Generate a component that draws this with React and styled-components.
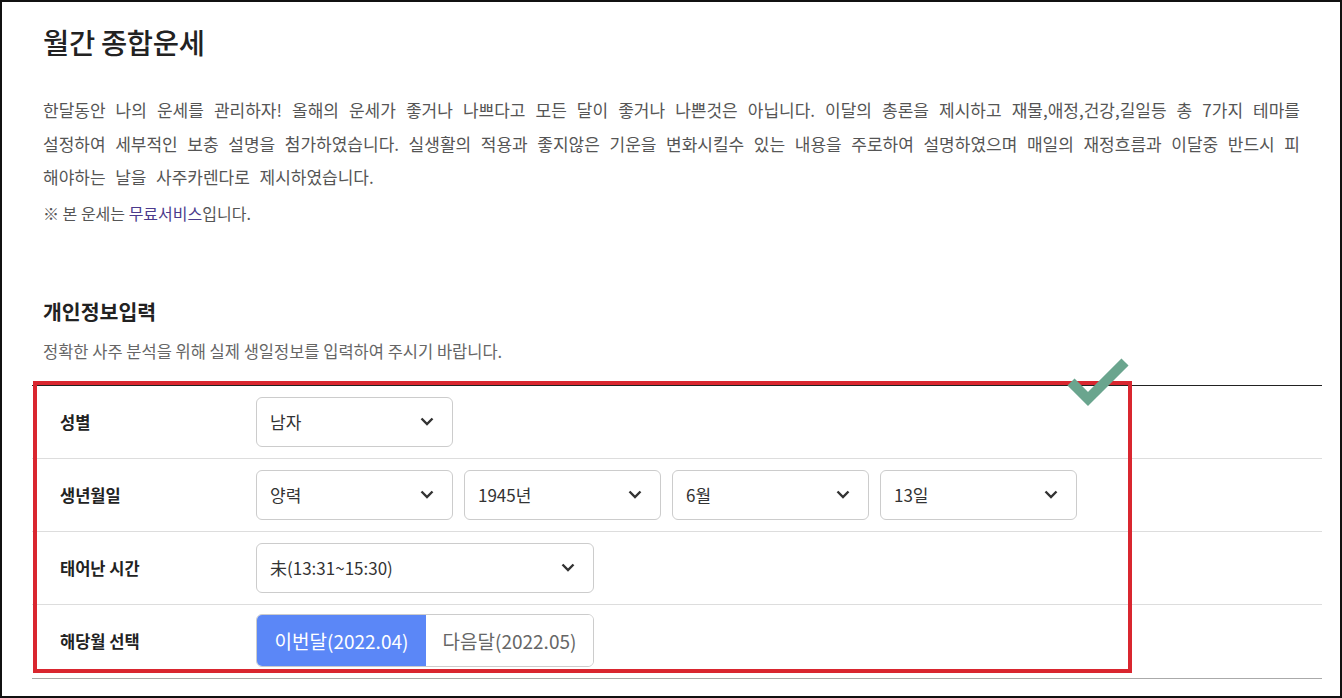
import React, { useState } from 'react'
import styled, { createGlobalStyle } from 'styled-components'

const GlobalStyle = createGlobalStyle`
  html, body {
    margin: 0;
    padding: 0;
    background: #fff;
  }
  body {
    font-family: "Noto Sans CJK KR", "Noto Sans", sans-serif;
    color: #222;
  }
  * { box-sizing: border-box; }
`

const Frame = styled.div`
  height: 100vh;
  border: 2px solid #111;
  overflow: hidden;
`

const Container = styled.div`
  position: relative;
  padding: 21px 18px 0 30px;
`

const Title = styled.h1`
  margin: 0 0 0 11px;
  font-size: 28.5px;
  line-height: 38px;
  font-weight: 500;
  color: #222;
  letter-spacing: -0.3px;
`

const Desc = styled.p`
  margin: 32px 0 0 11px;
  width: 1257px;
  font-size: 17px;
  line-height: 33.5px;
  word-spacing: 5.8px;
  text-align: justify;
  color: #555;
  font-weight: 400;
`

const Note = styled.p`
  margin: 8px 0 0 11px;
  font-size: 16px;
  line-height: 22px;
  color: #555;

  a {
    color: #4b3a8c;
    text-decoration: none;
  }
`

const SectionTitle = styled.h2`
  margin: 72px 0 0 11px;
  font-size: 20.5px;
  line-height: 30px;
  font-weight: 700;
  color: #222;
`

const SubText = styled.p`
  margin: 14px 0 0 11px;
  font-size: 16.5px;
  line-height: 22px;
  color: #666;
`

const Table = styled.div`
  margin-top: 23px;
  border-top: 1px solid #222;
  border-bottom: 1px solid #aaa;
`

const Row = styled.div`
  display: flex;
  align-items: center;
  height: 73px;
  border-bottom: 1px solid ${p => (p.last ? 'transparent' : '#ddd')};
`

const Label = styled.div`
  width: 224px;
  padding-left: 28px;
  font-size: 16.5px;
  font-weight: 700;
  color: #222;
`

const Fields = styled.div`
  display: flex;
  gap: 11px;
`

const Select = styled.div`
  display: flex;
  align-items: center;
  justify-content: space-between;
  width: ${p => p.w || 197}px;
  height: 50px;
  padding: 0 18px 0 13px;
  border: 1px solid #ccc;
  border-radius: 6px;
  font-size: 17px;
  color: #333;
  background: #fff;
  cursor: pointer;
`

const Toggle = styled.div`
  display: flex;
  width: 338px;
  height: 53px;
  border: 1px solid #ccc;
  border-radius: 6px;
  overflow: hidden;
`

const ToggleBtn = styled.button`
  flex: ${p => (p.active ? '0 0 169px' : '1')};
  border: 0;
  margin: 0;
  padding: 0;
  font-family: inherit;
  font-size: 19px;
  background: ${p => (p.active ? '#5b87f7' : '#fff')};
  color: ${p => (p.active ? '#fff' : '#666')};
  cursor: pointer;
`

const RedBox = styled.div`
  position: absolute;
  left: 31px;
  top: 379px;
  width: 1099px;
  height: 292px;
  border: 4px solid #d9262f;
  pointer-events: none;
`

const Check = styled.svg`
  position: absolute;
  left: 1058px;
  top: 338px;
  pointer-events: none;
`

function Chevron() {
  return (
    <svg width="14" height="9" viewBox="0 0 14 9">
      <polyline points="1.5,1.5 7,7 12.5,1.5" fill="none" stroke="#333" strokeWidth="2.4" />
    </svg>
  )
}

function Dropdown({ value, w }) {
  return (
    <Select w={w}>
      <span>{value}</span>
      <Chevron />
    </Select>
  )
}

export default function App() {
  const [month, setMonth] = useState('this')

  return (
    <Frame>
      <GlobalStyle />
      <Container>
        <Title>월간 종합운세</Title>
        <Desc>
          한달동안 나의 운세를 관리하자! 올해의 운세가 좋거나 나쁘다고 모든 달이 좋거나 나쁜것은 아닙니다. 이달의 총론을 제시하고 재물,애정,건강,길일등 총 7가지 테마를 설정하여 세부적인 보충 설명을 첨가하였습니다. 실생활의 적용과 좋지않은 기운을 변화시킬수 있는 내용을 주로하여 설명하였으며 매일의 재정흐름과 이달중 반드시 피해야하는 날을 사주카렌다로 제시하였습니다.
        </Desc>
        <Note>※ 본 운세는 <a href="#">무료서비스</a>입니다.</Note>

        <SectionTitle>개인정보입력</SectionTitle>
        <SubText>정확한 사주 분석을 위해 실제 생일정보를 입력하여 주시기 바랍니다.</SubText>

        <Table>
          <Row>
            <Label>성별</Label>
            <Fields>
              <Dropdown value="남자" />
            </Fields>
          </Row>
          <Row>
            <Label>생년월일</Label>
            <Fields>
              <Dropdown value="양력" />
              <Dropdown value="1945년" />
              <Dropdown value="6월" />
              <Dropdown value="13일" />
            </Fields>
          </Row>
          <Row>
            <Label>태어난 시간</Label>
            <Fields>
              <Dropdown value="未(13:31~15:30)" w={338} />
            </Fields>
          </Row>
          <Row last>
            <Label>해당월 선택</Label>
            <Toggle>
              <ToggleBtn active={month === 'this'} onClick={() => setMonth('this')}>이번달(2022.04)</ToggleBtn>
              <ToggleBtn active={month === 'next'} onClick={() => setMonth('next')}>다음달(2022.05)</ToggleBtn>
            </Toggle>
          </Row>
        </Table>

        <RedBox />
        <Check width="74" height="70" viewBox="0 0 74 70">
          <polyline points="11,42 28,59 65,22" fill="none" stroke="#6aa58e" strokeWidth="10" strokeLinecap="butt" strokeLinejoin="miter" />
        </Check>
      </Container>
    </Frame>
  )
}
